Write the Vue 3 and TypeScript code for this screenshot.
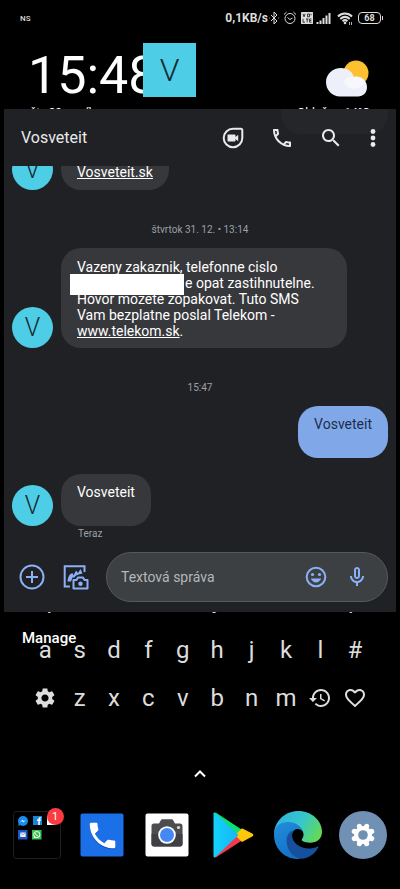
<script setup lang="ts">
import { ref } from 'vue'

interface Key {
  label: string
  icon?: string
}

const GEAR =
  'M19.14 12.94c.04-.3.06-.61.06-.94 0-.32-.02-.64-.07-.94l2.03-1.58c.18-.14.23-.41.12-.61l-1.92-3.32c-.12-.22-.37-.29-.59-.22l-2.39.96c-.5-.38-1.03-.7-1.62-.94l-.36-2.54c-.04-.24-.24-.41-.48-.41h-3.84c-.24 0-.43.17-.47.41l-.36 2.54c-.59.24-1.13.57-1.62.94l-2.39-.96c-.22-.08-.47 0-.59.22L2.74 8.87c-.12.21-.08.47.12.61l2.03 1.58c-.05.3-.09.63-.09.94s.02.64.07.94l-2.03 1.58c-.18.14-.23.41-.12.61l1.92 3.32c.12.22.37.29.59.22l2.39-.96c.5.38 1.03.7 1.62.94l.36 2.54c.05.24.24.41.48.41h3.84c.24 0 .44-.17.47-.41l.36-2.54c.59-.24 1.13-.56 1.62-.94l2.39.96c.22.08.47 0 .59-.22l1.92-3.32c.12-.22.07-.47-.12-.61l-2.01-1.58zM12 15.6c-1.98 0-3.6-1.62-3.6-3.6s1.62-3.6 3.6-3.6 3.6 1.62 3.6 3.6-1.62 3.6-3.6 3.6z'
const HISTORY =
  'M13 3c-4.97 0-9 4.03-9 9H1l3.89 3.89.07.14L9 12H6c0-3.87 3.13-7 7-7s7 3.13 7 7-3.13 7-7 7c-1.93 0-3.68-.79-4.94-2.06l-1.42 1.42C8.27 19.99 10.51 21 13 21c4.97 0 9-4.03 9-9s-4.03-9-9-9zm-1 5v5l4.28 2.54.72-1.21-3.5-2.08V8H12z'
const HEART =
  'M16.5 3c-1.74 0-3.41.81-4.5 2.09C10.91 3.81 9.24 3 7.5 3 4.42 3 2 5.42 2 8.5c0 3.78 3.4 6.86 8.55 11.54L12 21.35l1.45-1.32C18.6 15.36 22 12.28 22 8.5 22 5.42 19.58 3 16.5 3zm-4.4 15.55l-.1.1-.1-.1C7.14 14.24 4 11.39 4 8.5 4 6.5 5.5 5 7.5 5c1.54 0 3.04.99 3.57 2.36h1.87C13.46 5.99 14.96 5 16.5 5c2 0 3.5 1.5 3.5 3.5 0 2.89-3.14 5.74-7.9 10.05z'
const PHONE =
  'M6.62 10.79c1.44 2.83 3.76 5.14 6.59 6.59l2.2-2.2c.27-.27.67-.36 1.02-.24 1.12.37 2.33.57 3.57.57.55 0 1 .45 1 1V20c0 .55-.45 1-1 1-9.39 0-17-7.61-17-17 0-.55.45-1 1-1h3.5c.55 0 1 .45 1 1 0 1.25.2 2.45.57 3.57.11.35.03.74-.25 1.02l-2.2 2.2z'

const letters = (text: string): Key[] => text.split('').map((label) => ({ label }))

const topKeys = letters('qwertyuiop')
const keyRows: Key[][] = [
  letters('asdfghjkl#'),
  [
    { label: 'Nastavenia', icon: GEAR },
    ...letters('zxcvbnm'),
    { label: 'História', icon: HISTORY },
    { label: 'Obľúbené', icon: HEART },
  ],
]

const draft = ref('')
</script>

<template>
  <main class="screen">
    <div class="status">
      <span class="carrier">NS</span>
      <div class="indicators">
        <span class="speed">0,1KB/s</span>
        <svg class="bt" viewBox="0 0 12 14">
          <path d="M3 4l6 6-3 3V1l3 3-6 6M1 7h.6M10.4 7h.6" />
        </svg>
        <svg class="alarm" viewBox="0 0 14 14">
          <circle cx="7" cy="7.500" r="5" />
          <path d="M4.500 6.500L7 8.500l2.500-1.500M1 3.500L3.500 1.200M13 3.500L10.500 1.200" />
        </svg>
        <svg class="volte" viewBox="0 0 12 12">
          <rect width="12" height="12" rx="1.500" fill="#ddd" />
          <path d="M2 1.800l1 3 1-3M6.500 2h2v2.800h-2zM2 6.800v3.400h2M5 7h2.500M6.200 7v3.200M10.500 7H8.600v3.200h1.900M8.600 8.600h1.700M10 1.800v1.500" fill="none" stroke="#111" stroke-width=".8" />
        </svg>
        <svg class="signal" viewBox="0 0 16 12">
          <path d="M1.500 12v-2M4.500 12V8.500M7.500 12V6M10.500 12V3.500M13.500 12V1" />
        </svg>
        <svg class="wifi" viewBox="0 0 16 13">
          <path d="M1 4.500c4-4 10-4 14 0M3.300 7c3-2.700 6.400-2.700 9.400 0M5.600 9.200c1.500-1.300 3.300-1.300 4.800 0" />
          <circle cx="8" cy="11" r="1.300" fill="#ddd" stroke="none" />
          <path d="M12.500 10v3M14.500 10v3" stroke-width=".8" />
        </svg>
        <span class="battery">68</span>
      </div>
    </div>

    <header class="home">
      <div>
        <div class="clock">15:48</div>
        <div class="caption">št., 29. apríl</div>
      </div>
      <div class="weather">
        <svg viewBox="0 0 44 38">
          <circle cx="30" cy="13" r="12.500" fill="#fdc02f" />
          <path d="M15 8c6 0 11 3 13 9 6-2 13 3 13 10 0 6-4 9.500-9 9.500H14C6 36.500 0 30 0 22S7 8 15 8z" fill="#edf0fa" />
          <path d="M28 17c-5 0-9 1-10 5 2 6 8 8 14 6 3-1 6-4 7-6-2-4-7-6-11-5z" fill="#f6f8fe" />
        </svg>
        <div class="caption">Oblačno 14°C</div>
      </div>
      <div class="bubble-head">V</div>
    </header>

    <section class="panel">
      <header class="appbar">
        <span class="ghost"></span>
        <h1>Vosveteit</h1>
        <button aria-label="Videohovor">
          <svg viewBox="0 0 24 24">
            <path d="M12 2.700h7.800c.8 0 1.500.7 1.500 1.500V12A9.300 9.300 0 1 1 12 2.700z" fill="none" stroke="currentColor" stroke-width="2" />
            <path d="M7.300 8.500h6.400c.5 0 .8.300.8.800v1.700l2.700-2.200v6.400L14.500 13v1.700c0 .5-.3.800-.8.800H7.300c-.5 0-.8-.3-.8-.8V9.300c0-.5.300-.8.800-.8z" />
          </svg>
        </button>
        <button aria-label="Zavolať">
          <svg viewBox="0 0 24 24">
            <path d="M6.540 5c.06.89.21 1.760.45 2.590l-1.200 1.200c-.41-1.200-.67-2.470-.76-3.790h1.510m9.860 12.020c.85.24 1.720.39 2.600.45v1.490c-1.320-.09-2.590-.35-3.800-.75l1.200-1.190M7.500 3H4c-.55 0-1 .45-1 1 0 9.390 7.610 17 17 17 .55 0 1-.45 1-1v-3.490c0-.55-.45-1-1-1-1.240 0-2.450-.2-3.570-.57-.1-.04-.21-.05-.31-.05-.26 0-.51.1-.71.290l-2.200 2.200c-2.830-1.450-5.150-3.760-6.590-6.590l2.200-2.200c.28-.28.36-.67.25-1.020C8.700 6.450 8.500 5.250 8.500 4c0-.55-.45-1-1-1z" />
          </svg>
        </button>
        <button aria-label="Hľadať">
          <svg viewBox="0 0 24 24">
            <path d="M15.500 14h-.79l-.28-.27C15.410 12.590 16 11.110 16 9.500 16 5.910 13.090 3 9.500 3S3 5.910 3 9.500 5.910 16 9.500 16c1.610 0 3.090-.59 4.230-1.570l.27.28v.79l5 4.990L20.490 19l-4.990-5zm-6 0C7.010 14 5 11.990 5 9.500S7.010 5 9.500 5 14 7.010 14 9.500 11.990 14 9.500 14z" />
          </svg>
        </button>
        <button class="more" aria-label="Viac">
          <svg viewBox="0 0 24 24">
            <circle cx="12" cy="5.500" r="2.400" /><circle cx="12" cy="12" r="2.400" /><circle cx="12" cy="18.500" r="2.400" />
          </svg>
        </button>
      </header>

      <div class="thread">
        <div class="row cut">
          <div class="avatar">V</div>
          <p class="bubble"><a href="#">Vosveteit.sk</a></p>
        </div>
        <time class="stamp">štvrtok 31. 12. • 13:14</time>
        <div class="row">
          <div class="avatar">V</div>
          <p class="bubble long">
            Vazeny zakaznik, telefonne cislo<br />
            <span class="redacted"></span>e opat zastihnutelne.<br />
            Hovor mozete zopakovat. Tuto SMS<br />
            Vam bezplatne poslal Telekom -<br />
            <a href="#">www.telekom.sk</a>.
          </p>
        </div>
        <time class="stamp">15:47</time>
        <div class="row own"><p class="bubble">Vosveteit</p></div>
        <div class="row last">
          <div class="avatar">V</div>
          <p class="bubble">Vosveteit</p>
        </div>
        <div class="sent">Teraz</div>
      </div>

      <form class="composer" @submit.prevent>
        <button type="button" aria-label="Pridať">
          <svg viewBox="0 0 28 28" class="line">
            <circle cx="14" cy="14" r="11.500" /><path d="M14 8v12M8 14h12" />
          </svg>
        </button>
        <button type="button" aria-label="Galéria">
          <svg viewBox="0 0 28 28" class="line">
            <path d="M8 23.500H2.700V3.200H22.500V9" />
            <path d="M5.500 18.500c.5-5 2-7.500 5-8.500l1 2.500L14 7.500l2 2.500 2.500-4 2 4.500c-5 1-7 2-8 4h-2l-1.500 4z" fill="currentColor" stroke="none" />
            <path d="M11.500 17h3l1.500-2.500h5l1.500 2.500h3v8.500h-14z" stroke-linejoin="round" />
            <circle cx="18.500" cy="20.700" r="2.200" fill="currentColor" stroke="none" />
          </svg>
        </button>
        <div class="field">
          <input v-model="draft" type="text" placeholder="Textová správa" aria-label="Textová správa" />
          <button type="button" aria-label="Emotikony">
            <svg viewBox="0 0 24 24">
              <circle cx="12" cy="12" r="9.300" fill="none" stroke="currentColor" stroke-width="2" />
              <circle cx="8.500" cy="9.500" r="1.600" /><circle cx="15.500" cy="9.500" r="1.600" />
              <path d="M6.800 13.500h10.400c-.8 2.300-2.800 4-5.200 4s-4.400-1.700-5.200-4z" />
            </svg>
          </button>
          <button type="button" aria-label="Hlasová správa">
            <svg viewBox="0 0 24 24">
              <path d="M12 14c1.660 0 3-1.340 3-3V5c0-1.660-1.340-3-3-3S9 3.340 9 5v6c0 1.660 1.340 3 3 3zm-1-9c0-.55.45-1 1-1s1 .45 1 1v6c0 .55-.45 1-1 1s-1-.45-1-1V5zm6 6c0 2.760-2.240 5-5 5s-5-2.240-5-5H5c0 3.530 2.610 6.430 6 6.920V21h2v-3.080c3.390-.49 6-3.390 6-6.920h-2z" />
            </svg>
          </button>
        </div>
      </form>
    </section>

    <section class="keyboard">
      <div class="keys peek">
        <span v-for="key in topKeys" :key="key.label">{{ key.label }}</span>
      </div>
      <a class="manage" href="#">Manage</a>
      <div v-for="(row, index) in keyRows" :key="index" class="keys">
        <button v-for="key in row" :key="key.label" :aria-label="key.label">
          <svg v-if="key.icon" viewBox="0 0 24 24"><path :d="key.icon" /></svg>
          <template v-else>{{ key.label }}</template>
        </button>
      </div>
    </section>

    <button class="expand" aria-label="Aplikácie">
      <svg viewBox="0 0 16 16"><path d="M3 10.500l5-5 5 5" /></svg>
    </button>

    <nav class="dock">
      <a href="#" aria-label="Priečinok">
        <svg viewBox="0 0 48 48">
          <rect x=".5" y=".5" width="47" height="47" rx="3" fill="none" stroke="#1d1f20" />
          <circle cx="10" cy="10" r="5" fill="#168df0" /><path d="M5.500 12v3l3-1.500z" fill="#168df0" />
          <path d="M6.800 11.800l2.600-3 1.500 1.500 2.300-1.700-2.600 3-1.500-1.500z" fill="#fff" />
          <rect x="20" y="5" width="9" height="9" fill="#1685d5" />
          <path d="M25.300 14v-4h-1.300V8.500h1.300c0-2 1-2.500 2.700-2.300v1.400c-1-.1-1.200.1-1.200.9H28L27.700 10h-.9v4z" fill="#fff" />
          <rect x="34" y="5" width="9" height="9" fill="#fff" />
          <rect x="5" y="19" width="9.500" height="9.500" fill="#1b57bd" />
          <rect x="7.200" y="21.500" width="5.500" height="4.500" rx=".5" fill="#eef" /><path d="M7.500 22l2.500 1.700 2.500-1.700" stroke="#6d8dd0" fill="none" stroke-width=".7" />
          <rect x="19" y="19" width="9.500" height="9.500" fill="#35c24c" />
          <circle cx="23.800" cy="23.600" r="3.100" fill="none" stroke="#fff" /><path d="M20.500 27.300l.7-2.500 1.600 1.800z" fill="#fff" />
          <path d="M22.600 22.300c0 1.500 1 2.500 2.600 2.700" stroke="#fff" fill="none" />
        </svg>
        <span class="count">1</span>
      </a>
      <a href="#" aria-label="Telefón">
        <svg viewBox="0 0 48 48">
          <rect x="2.500" y="2.500" width="43" height="43" rx="2" fill="#1b70e8" />
          <path :d="PHONE" fill="#0c50b8" transform="translate(7.500 8.500) scale(1.420)" />
          <path :d="PHONE" fill="#fff" transform="translate(7.500 7.500) scale(1.420)" />
        </svg>
      </a>
      <a href="#" aria-label="Fotoaparát">
        <svg viewBox="0 0 48 48">
          <rect x="2.500" y="2.500" width="43" height="43" rx="2" fill="#fff" />
          <path d="M11 12.500h5l2-3.500c.3-.5.6-.7 1.200-.7h9.600c.6 0 .9.200 1.200.7l2 3.500h5c1.500 0 2.500 1 2.500 2.500v18c0 1.500-1 2.500-2.500 2.500H11c-1.500 0-2.500-1-2.500-2.500V15c0-1.500 1-2.500 2.500-2.500z" fill="#4b4d50" />
          <path d="M8.500 23h31v10c0 1.500-1 2.500-2.500 2.500H11c-1.500 0-2.500-1-2.500-2.500z" fill="#3e4043" />
          <circle cx="24" cy="24" r="8.800" fill="#fff" /><circle cx="24" cy="24" r="7" fill="#4688f3" />
          <circle cx="35.500" cy="16.500" r="1.600" fill="#ddd" />
        </svg>
      </a>
      <a href="#" aria-label="Obchod Play">
        <svg viewBox="0 0 48 48">
          <defs>
            <linearGradient id="playBlue" x1="0" y1="0" x2="1" y2="0">
              <stop offset="0" stop-color="#12d2fb" /><stop offset="1" stop-color="#18b5f4" />
            </linearGradient>
          </defs>
          <path d="M4.500 3C4.500 1.500 6 1 7.500 2l25 16.500-6.500 7z" fill="#0be073" />
          <path d="M5 45.500c.7 1.200 2 1 3 .2l25-16.200-6.500-7z" fill="#f23a4c" />
          <path d="M26 24l7-6.700 10.200 5.200c1.600.8 1.600 2.200 0 3L33 31z" fill="#fdc70a" />
          <path d="M4.500 3c0-1 .8-1.500 1.600-1L29.500 24 6.200 46.200c-.8.500-1.700 0-1.700-1z" fill="url(#playBlue)" />
        </svg>
      </a>
      <a href="#" aria-label="Edge">
        <svg viewBox="0 0 144 144">
          <defs>
            <linearGradient id="edgeTop" x1="0" y1=".3" x2="1" y2=".7">
              <stop offset="0" stop-color="#2fb3e0" /><stop offset=".5" stop-color="#37c6cb" /><stop offset="1" stop-color="#65dc50" />
            </linearGradient>
            <linearGradient id="edgeLeft" x1="0" y1="0" x2=".5" y2="1">
              <stop offset="0" stop-color="#218edb" /><stop offset="1" stop-color="#1370c6" />
            </linearGradient>
          </defs>
          <path d="M0 68C3 28 34 0 73 0c40 0 71 29 71 62 0 22-16 33-36 33-16 0-28-5-24-11 10-12 4-32-16-33L28 36z" fill="url(#edgeTop)" />
          <path d="M0 72c0-26 20-39 41-39 25 0 43 15 45 28-8-9-21-9-27-2-14 18 0 48 35 55l-18 30C32 146 0 112 0 72z" fill="url(#edgeLeft)" />
          <path d="M57 58c-13 6-20 18-19 34 2 30 24 52 48 51 20-2 38-15 47-34 1-3 0-4-3-2-34 15-76-4-76-35 0-6 1-10 3-14z" fill="#154f9d" />
        </svg>
      </a>
      <a href="#" aria-label="Nastavenia">
        <svg viewBox="0 0 48 48">
          <circle cx="24" cy="24" r="24" fill="#7091b3" />
          <path d="M24 14.500v19M14.500 24h19M17.300 17.300l13.400 13.400M30.700 17.300L17.300 30.700" stroke="#fff" stroke-width="5" stroke-linecap="round" transform="rotate(22.500 24 24)" />
          <circle cx="24" cy="24" r="9" fill="#fff" /><circle cx="24" cy="24" r="4.800" fill="#7091b3" />
        </svg>
      </a>
    </nav>
  </main>
</template>

<style>
body {
  background: #000;
}
</style>

<style scoped>
.screen {
  min-height: 100vh;
  overflow: hidden;
  background: #000;
  color: #fff;
  font-family: Roboto, "Noto Sans", sans-serif;
}
button {
  display: flex;
  align-items: center;
  justify-content: center;
  border: 0;
  padding: 0;
  background: none;
  color: inherit;
  font: inherit;
}
svg {
  display: block;
  fill: currentColor;
}
a {
  color: inherit;
}
.status {
  display: flex;
  align-items: center;
  justify-content: space-between;
  height: 36px;
  padding: 0 19px 0 20px;
  color: #ddd;
}
.carrier {
  font-size: 8px;
  font-weight: 500;
}
.indicators {
  display: flex;
  align-items: center;
  gap: 3px;
}
.indicators svg {
  stroke: #ddd;
  fill: none;
}
.speed {
  font-size: 12px;
  font-weight: 700;
  margin-right: -3px;
}
.bt {
  width: 12px;
  height: 14px;
}
.alarm {
  width: 14px;
  height: 14px;
}
.volte {
  width: 12px;
  height: 12px;
  margin-left: 1px;
}
.signal {
  width: 16px;
  height: 12px;
  stroke-width: 2;
}
.wifi {
  width: 16px;
  height: 13px;
  margin: 0 2px;
  stroke-width: 2;
}
.battery {
  position: relative;
  width: 21px;
  border: 1px solid #ddd;
  border-radius: 4px;
  font-size: 9px;
  font-weight: 700;
  line-height: 10px;
  text-align: center;
}
.battery::after {
  content: "";
  position: absolute;
  right: -3px;
  top: 3px;
  width: 1px;
  height: 4px;
  background: #ddd;
}
.home {
  position: relative;
  display: flex;
  justify-content: space-between;
  height: 73px;
  padding: 0 30px 0 28px;
}
.home > div:first-child,
.weather {
  overflow: hidden;
}
.clock {
  margin-top: 10px;
  font-size: 52px;
  line-height: 60px;
}
.caption {
  padding-left: 2px;
  font-size: 12px;
  line-height: 14px;
  white-space: nowrap;
}
.weather svg {
  width: 44px;
  height: 38px;
  margin: 24px 0 8px 31px;
}
.bubble-head {
  position: absolute;
  left: 143px;
  top: 7px;
  width: 53px;
  height: 54px;
  background: #4dcee6;
  color: #1b2a33;
  font-size: 32px;
  font-weight: 300;
  line-height: 54px;
  text-align: center;
}
.panel {
  margin: 0 4px;
  background: #202124;
}
.appbar {
  position: relative;
  display: flex;
  align-items: center;
  height: 57px;
  padding: 0 15px 0 17px;
  overflow: hidden;
  color: #e8eaed;
}
.ghost {
  position: absolute;
  right: 8px;
  top: -27px;
  width: 107px;
  height: 52px;
  border-radius: 20px;
  background: #24262a;
}
h1 {
  flex: 1;
  margin: 0;
  font-size: 16px;
  font-weight: 400;
}
.appbar button {
  position: relative;
  width: 24px;
  height: 24px;
  margin-right: 25px;
}
.appbar .more {
  margin: 0 -4px 0 -7px;
}
.appbar svg {
  width: 24px;
  height: 24px;
}
.thread {
  display: flex;
  flex-direction: column;
  padding: 0 8px;
}
.row {
  display: flex;
  align-items: flex-end;
  gap: 8px;
}
.cut {
  height: 24px;
  overflow: hidden;
}
.avatar {
  flex: none;
  width: 41px;
  height: 41px;
  border-radius: 50%;
  background: #4dcee6;
  color: #1b2a33;
  font-size: 25px;
  font-weight: 300;
  line-height: 41px;
  text-align: center;
}
.bubble {
  box-sizing: border-box;
  min-height: 52px;
  margin: 0;
  padding: 10px 16px;
  border-radius: 20px;
  background: #37383c;
  font-size: 14px;
  line-height: 16px;
}
.cut .bubble {
  padding-top: 26px;
}
.long {
  width: 286px;
  padding: 11px 16px 9px;
}
.redacted {
  position: relative;
  display: inline-block;
  width: 114px;
  height: 21px;
  margin: -4px 1px -4px -7px;
  background: #fff;
  vertical-align: middle;
}
.own {
  justify-content: flex-end;
}
.own .bubble {
  background: #80a8e8;
  color: #1c2d4d;
}
.last {
  margin-top: 16px;
}
.stamp {
  margin: 32px 0 10px;
  color: #9aa0a6;
  font-size: 10px;
  line-height: 16px;
  text-align: center;
}
.sent {
  margin-left: 66px;
  color: #9aa0a6;
  font-size: 10px;
  line-height: 15px;
}
.composer {
  display: flex;
  align-items: center;
  gap: 16px;
  padding: 11px 8px 10px 14px;
  color: #8ab0f5;
}
.composer > button,
.composer > button svg {
  width: 28px;
  height: 28px;
}
.line {
  fill: none;
  stroke: currentColor;
  stroke-width: 2;
}
.field {
  box-sizing: border-box;
  flex: 1;
  min-width: 0;
  display: flex;
  align-items: center;
  gap: 17px;
  height: 50px;
  padding: 0 18px 0 14px;
  border: 1px solid #56595c;
  border-radius: 25px;
  background: #3c4043;
}
.field svg {
  width: 24px;
  height: 24px;
}
input {
  flex: 1;
  min-width: 0;
  border: 0;
  padding: 0;
  outline: 0;
  background: none;
  color: #fff;
  font: inherit;
  font-size: 14px;
}
input::placeholder {
  color: #b4b7ba;
  opacity: 1;
}
.keyboard {
  position: relative;
  padding: 0 28px;
  color: #ddd;
}
.keys {
  display: grid;
  grid-template-columns: repeat(10, 1fr);
  height: 48px;
  font-size: 24px;
  text-align: center;
}
.keys svg {
  width: 24px;
  height: 24px;
}
.keys.peek {
  height: 2px;
  margin-bottom: 12px;
  overflow: hidden;
  align-content: end;
  line-height: 28px;
}
.manage {
  position: absolute;
  left: 22px;
  top: 17px;
  color: #fff;
  font-size: 15px;
  font-weight: 500;
  line-height: 18px;
  text-decoration: none;
}
.expand {
  width: 24px;
  height: 24px;
  margin: 40px auto 25px;
}
.expand svg {
  width: 16px;
  height: 16px;
  fill: none;
  stroke: #fff;
  stroke-width: 2;
}
.dock {
  display: grid;
  grid-template-columns: repeat(6, 1fr);
  justify-items: center;
  padding: 0 4px;
}
.dock a {
  position: relative;
  width: 48px;
  height: 48px;
}
.dock svg {
  width: 48px;
  height: 48px;
}
.count {
  position: absolute;
  right: -3px;
  top: -3px;
  width: 17px;
  height: 17px;
  border-radius: 50%;
  background: #fb3b41;
  color: #fff;
  font-size: 11px;
  line-height: 17px;
  text-align: center;
}
</style>
